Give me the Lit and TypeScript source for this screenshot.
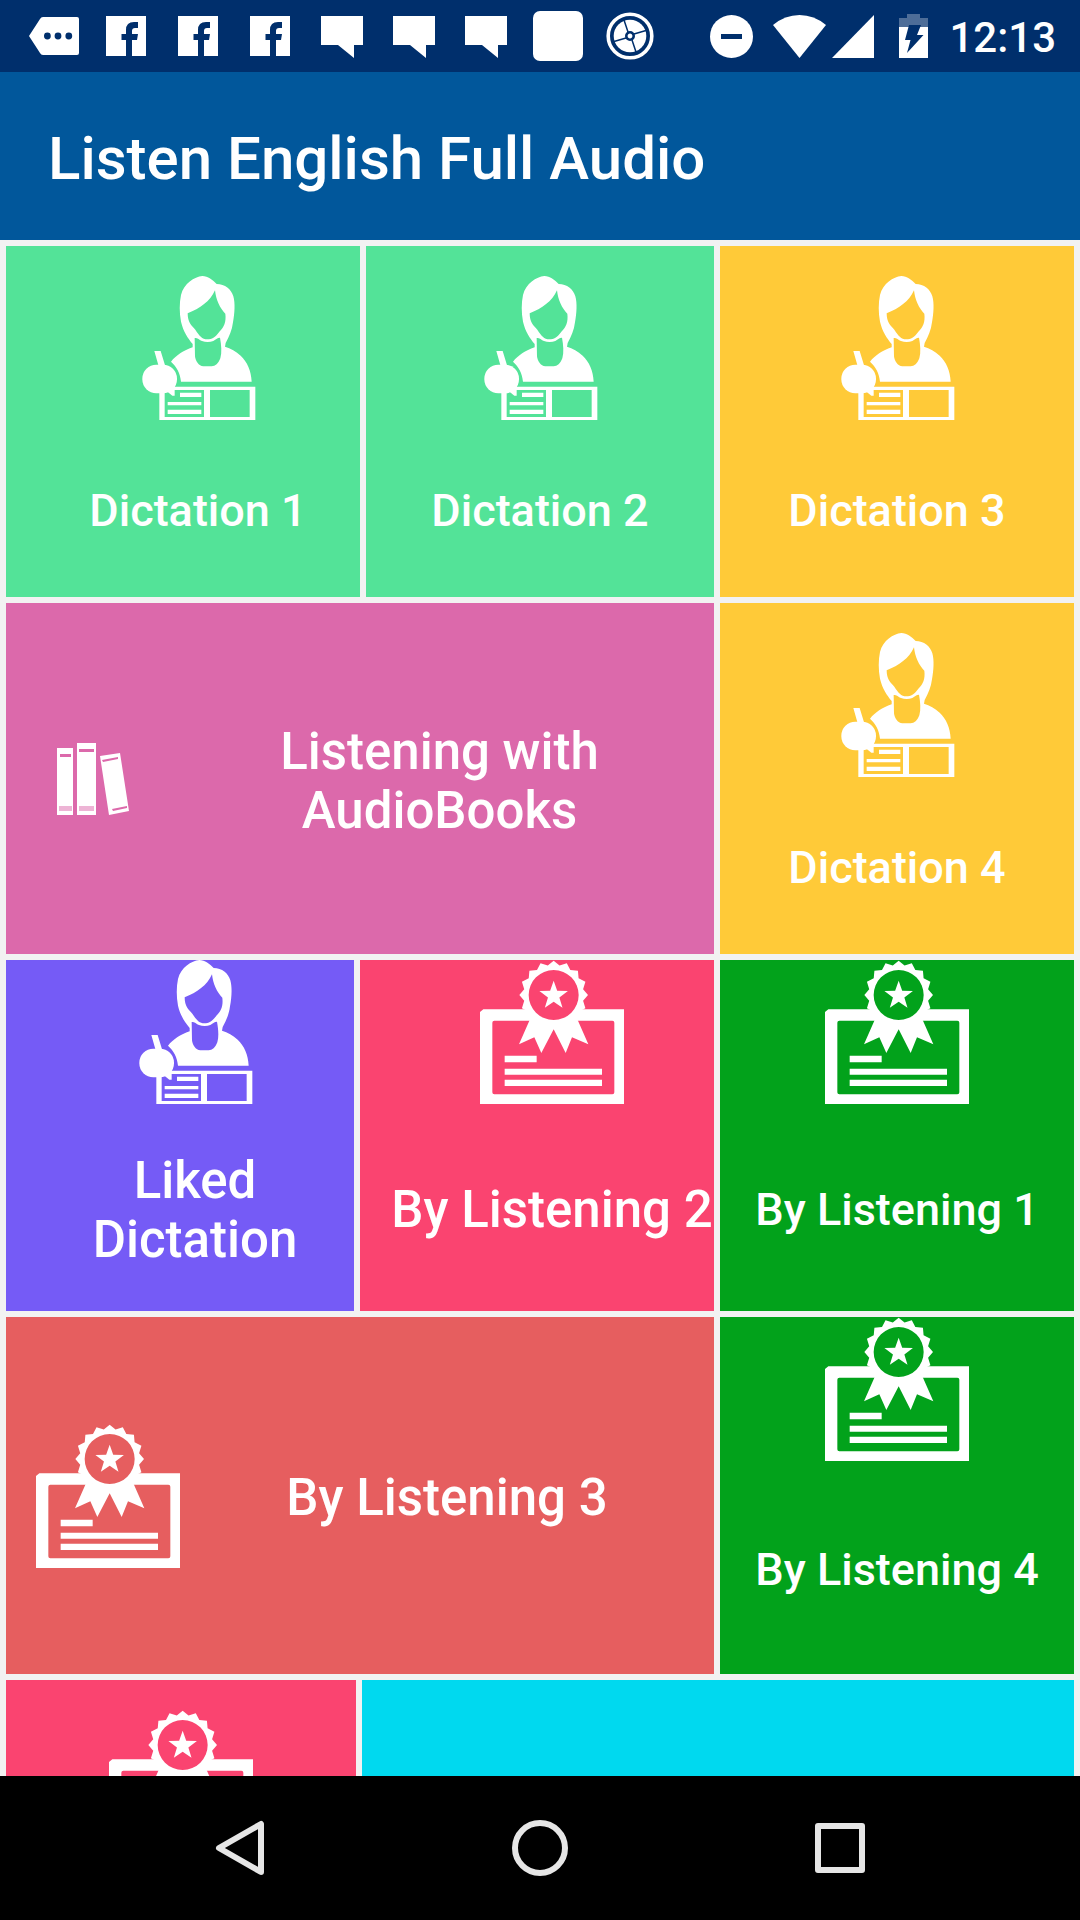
import { LitElement, html, css, svg, nothing } from "lit";
import { customElement, property } from "lit/decorators.js";
import { classMap } from "lit/directives/class-map.js";

type IconName = "teacher" | "certificate" | "books";

/* Alternating outer and inner vertices of a round toothed or starred shape. */
const spikes = (cx: number, cy: number, count: number, outer: number, inner: number): string =>
  Array.from({ length: count * 2 }, (_, i) => {
    const r = i % 2 === 0 ? outer : inner;
    const a = (Math.PI * i) / count - Math.PI / 2;
    return `${(cx + r * Math.cos(a)).toFixed(1)},${(cy + r * Math.sin(a)).toFixed(1)}`;
  }).join(" L");

const medal =
  `M${spikes(221, 105, 16, 103, 90)}Z` +
  "M296 105a75 75 0 1 0-150 0a75 75 0 1 0 150 0Z";

const teacherIcon = svg`
  <svg class="icon" viewBox="378 123 432 432" aria-hidden="true">
    <path fill="currentColor" fill-rule="evenodd" d="M607 123C583 126 552 145 543 180C538 205 538 232 543 260C550 290 564 310 578 327V337C550 346 528 362 513 380C530 396 540 412 543 440H755C753 405 742 382 722 362C708 349 692 340 675 335L677 324C688 304 696 286 699 262C704 236 706 205 700 184C694 163 675 147 650 147C638 134 624 124 607 123Z
      M563 235C600 220 630 200 645 166C648 195 660 220 676 236C679 262 672 276 658 290C645 308 636 313 622 313C606 313 598 302 586 284C574 272 563 262 563 235Z
      M584 309C590 307 598 314 606 318C616 322 630 322 640 318C646 314 652 308 660 308C664 330 666 352 661 370C655 386 646 394 635 394H610C596 394 586 376 585 364Z"/>
    <rect fill="currentColor" x="427" y="389" width="104" height="86" rx="42"/>
    <path fill="currentColor" d="M463 348H482L496 394H476ZM496 455L524 446V482H517L497 466Z"/>
    <path fill="currentColor" fill-rule="evenodd" d="M478 455H766V555H478ZM494 465V546H612V465ZM630 465V546H749V465Z"/>
    <path fill="currentColor" d="M540 473H604V486H540ZM503 501H604V511H503ZM503 524H604V537H503Z"/>
  </svg>`;

const certificateIcon = svg`
  <svg class="icon" viewBox="0 0 432 432" aria-hidden="true">
    <path fill="currentColor" d="M10 148H145L160 170L175 182H43Q37 182 37 188V397Q37 403 43 403H397Q403 403 403 397V188Q403 182 397 182H267L282 170L297 148H432V432H0V156Z"/>
    <path fill="currentColor" fill-rule="evenodd" d=${medal}/>
    <path fill="currentColor" d="M150 178Q221 186 292 178L325 253L276 232L257 279L221 208L184 279L163 232L117 253Z"/>
    <path fill="currentColor" d=${`M${spikes(221, 107, 5, 45, 18)}Z`}/>
    <path fill="currentColor" d="M74 287H170V307H74ZM74 326H366V344H74ZM74 359H366V378H74Z"/>
  </svg>`;

const booksIcon = svg`
  <svg class="icon small" viewBox="0 0 72 72" aria-hidden="true">
    <path fill="currentColor" fill-rule="evenodd" d="M0 5H16V72H0ZM3 11V14H14V11ZM20 0H39V72H20ZM22 6V9H37V6ZM43 13L63 10L72 68L52 72ZM45 17L46 19L61 16V14Z"/>
    <path fill="#dc69ab" fill-opacity=".5" d="M2 63H15V68H2ZM22 63H37V68H22Z"/>
    <path fill="#dc69ab" d="M55 66L70 63V65L56 68Z"/>
  </svg>`;

const icons = { teacher: teacherIcon, certificate: certificateIcon, books: booksIcon };

@customElement("menu-tile")
export class MenuTile extends LitElement {
  @property() icon?: IconName;
  @property() label = "";
  @property() name = "";
  @property() tone = "";
  @property({ type: Boolean }) wide = false;
  @property({ type: Boolean }) large = false;
  @property({ type: Boolean }) inset = false;
  @property({ type: Boolean }) raised = false;

  static styles = css`
    :host {
      display: flex;
      min-width: 0;
    }
    .tile {
      flex: 1;
      min-width: 0;
      display: flex;
      flex-direction: column;
      align-items: center;
      margin: 0;
      padding: 30px 0 0;
      border: 0;
      color: #fff;
      font: 500 45px/53px Roboto, sans-serif;
      text-align: center;
      overflow: hidden;
      cursor: pointer;
    }
    .large { font-size: 51px; line-height: 59px; }
    .raised { padding-top: 0; }
    .inset { padding-left: 30px; }
    .wide { flex-direction: row; padding: 0 0 0 30px; }
    .icon { width: 144px; height: 144px; flex: none; }
    .small { width: 72px; height: 72px; margin: 0 36px 0 21px; }
    .label {
      flex: 1;
      display: flex;
      align-items: center;
      justify-content: center;
      padding-top: 4px;
      white-space: pre-line;
    }
    .mint { background: #53e398; }
    .amber { background: #ffca38; }
    .orchid { background: #dc69ab; }
    .violet { background: #755bf6; }
    .rose { background: #fa4470; }
    .green { background: #02a21b; }
    .coral { background: #e65e5f; }
    .cyan { background: #00d9ef; }
  `;

  render() {
    const classes = {
      tile: true,
      [this.tone]: true,
      wide: this.wide,
      large: this.large,
      inset: this.inset,
      raised: this.raised,
    };
    return html`
      <button class=${classMap(classes)} type="button" aria-label=${this.name || nothing}>
        ${this.icon ? icons[this.icon] : nothing}
        ${this.label ? html`<span class="label">${this.label}</span>` : nothing}
      </button>`;
  }
}

const overflowIcon = svg`
  <svg width="50" height="38" viewBox="0 0 50 38" aria-hidden="true">
    <path fill="#fff" fill-rule="evenodd" d="M14 0H48Q50 0 50 2V36Q50 38 48 38H14Q12 38 11 36L0 19L11 2Q12 0 14 0Z
      M15 19a3.4 3.4 0 1 0 6.8 0a3.4 3.4 0 1 0-6.8 0ZM25.6 19a3.4 3.4 0 1 0 6.8 0a3.4 3.4 0 1 0-6.8 0ZM36.4 19a3.4 3.4 0 1 0 6.8 0a3.4 3.4 0 1 0-6.8 0Z"/>
  </svg>`;

const facebookIcon = svg`
  <svg width="40" height="40" viewBox="0 0 40 40" aria-hidden="true">
    <path fill="#fff" d="M0 0H40V40H26V24H31L32 18H26V15Q26 12 29 12H32V6H28Q20 6 20 14V18H15.500V24H20V40H0Z"/>
  </svg>`;

const bubbleIcon = svg`
  <svg class="bubble" width="42" height="42" viewBox="0 0 42 42" aria-hidden="true">
    <path fill="#fff" d="M0 0H42V29H33V42L17 29H0Z"/>
  </svg>`;

const squareIcon = svg`
  <svg width="50" height="50" viewBox="0 0 50 50" aria-hidden="true">
    <rect fill="#fff" width="50" height="50" rx="7"/>
  </svg>`;

const wheelIcon = svg`
  <svg width="48" height="48" viewBox="-24 -24 48 48" aria-hidden="true">
    <circle r="21.8" fill="none" stroke="#fff" stroke-width="3.600"/>
    <circle r="16.300" fill="#fff"/>
    <path stroke="#002f6c" stroke-width="1.500" d="M-6 -16L-2 -4M16 -5.500L4 -2M6 16L2 4M-16 5.500L-4 2"/>
    <circle r="3.700" fill="#fff" stroke="#002f6c" stroke-width="2.600"/>
  </svg>`;

const notifications = [
  overflowIcon, facebookIcon, facebookIcon, facebookIcon,
  bubbleIcon, bubbleIcon, bubbleIcon, squareIcon, wheelIcon,
];

@customElement("status-bar")
export class StatusBar extends LitElement {
  static styles = css`
    :host {
      display: flex;
      align-items: center;
      justify-content: space-between;
      height: 72px;
      padding: 0 24px 0 18px;
      background: #002f6c;
      color: #fff;
      font: 500 42px/48px Roboto, sans-serif;
    }
    .group { display: flex; align-items: center; }
    .cell { width: 72px; display: flex; justify-content: center; }
    .bubble { margin-top: 2px; }
    .wifi { margin: 0 6px 0 20px; }
    .battery { margin: 0 21px 0 25px; }
    .time { padding-top: 3px; }
  `;

  render() {
    return html`
      <div class="group">
        ${notifications.map((icon) => html`<span class="cell">${icon}</span>`)}
      </div>
      <div class="group">
        <svg width="43" height="43" viewBox="0 0 43 43" aria-hidden="true">
          <circle fill="#fff" cx="21.500" cy="21.500" r="21.500"/>
          <path fill="#002f6c" d="M11 19H32V24H11Z"/>
        </svg>
        <svg class="wifi" width="53" height="43" viewBox="0 0 53 43" aria-hidden="true">
          <path fill="#fff" d="M0 10Q12 0 26.500 0T53 10L26.500 43Z"/>
        </svg>
        <svg width="42" height="43" viewBox="0 0 42 43" aria-hidden="true">
          <path fill="#fff" d="M42 0V43H0Z"/>
        </svg>
        <svg class="battery" width="29" height="44" viewBox="0 0 29 44" aria-hidden="true">
          <path fill="#fff" fill-opacity=".3" d="M8 0H21V4H29V13H0V4H8Z"/>
          <path fill="#fff" d="M0 13H29V44H0Z"/>
          <path fill="#002f6c" d="M10 11H22L18 21H24.500L8 39L11.500 26H6Z"/>
        </svg>
        <time class="time">12:13</time>
      </div>`;
  }
}

@customElement("nav-bar")
export class NavBar extends LitElement {
  static styles = css`
    :host {
      display: flex;
      height: 144px;
      padding: 0 90px;
      background: #000;
    }
    .key {
      flex: 1;
      display: flex;
      align-items: center;
      justify-content: center;
      margin: 0;
      padding: 0;
      border: 0;
      background: none;
      cursor: pointer;
    }
    .glyph {
      width: 56px;
      height: 56px;
      fill: none;
      stroke: #e6e6e6;
      stroke-width: 6;
      stroke-linejoin: round;
    }
  `;

  render() {
    return html`
      <button class="key" type="button" aria-label="Back">
        <svg class="glyph" viewBox="0 0 56 56"><path d="M49 4V52L7 28Z"/></svg>
      </button>
      <button class="key" type="button" aria-label="Home">
        <svg class="glyph" viewBox="0 0 56 56"><circle cx="28" cy="28" r="25"/></svg>
      </button>
      <button class="key" type="button" aria-label="Recent apps">
        <svg class="glyph" viewBox="0 0 56 56"><path d="M6 6H50V50H6Z"/></svg>
      </button>`;
  }
}

@customElement("app-root")
export class AppRoot extends LitElement {
  static styles = css`
    :host {
      display: flex;
      flex-direction: column;
      height: 100vh;
      background: #f2f2f2;
    }
    .bar {
      flex: none;
      display: flex;
      align-items: center;
      box-sizing: border-box;
      height: 168px;
      padding: 5px 48px 0;
      background: #01579b;
    }
    .title {
      margin: 0;
      color: #fff;
      font: 500 60px/70px Roboto, sans-serif;
    }
    .status, .nav { flex: none; box-sizing: border-box; }
    .board {
      flex: 1;
      min-height: 0;
      overflow: hidden;
      padding: 6px;
      display: flex;
      flex-direction: column;
      gap: 6px;
    }
    .row { flex: none; display: grid; gap: 6px; min-height: 351px; }
    .tall { min-height: 357px; }
    .thirds { grid-template-columns: 354fr 348fr 354fr; }
    .thirds-alt { grid-template-columns: 348fr 354fr 354fr; }
    .wide-first { grid-template-columns: 2fr 1fr; }
    .wide-last { grid-template-columns: 350fr 712fr; }
  `;

  render() {
    return html`
      <status-bar class="status"></status-bar>
      <header class="bar"><h1 class="title">Listen English Full Audio</h1></header>
      <main class="board">
        <div class="row thirds">
          <menu-tile tone="mint" icon="teacher" label="Dictation 1" inset></menu-tile>
          <menu-tile tone="mint" icon="teacher" label="Dictation 2"></menu-tile>
          <menu-tile tone="amber" icon="teacher" label="Dictation 3"></menu-tile>
        </div>
        <div class="row wide-first">
          <menu-tile tone="orchid" icon="books" label=${"Listening with\nAudioBooks"} wide large></menu-tile>
          <menu-tile tone="amber" icon="teacher" label="Dictation 4"></menu-tile>
        </div>
        <div class="row thirds-alt">
          <menu-tile tone="violet" icon="teacher" label=${"Liked\nDictation"} inset raised large></menu-tile>
          <menu-tile tone="rose" icon="certificate" label="By Listening 2" inset raised large></menu-tile>
          <menu-tile tone="green" icon="certificate" label="By Listening 1" raised></menu-tile>
        </div>
        <div class="row tall wide-first">
          <menu-tile tone="coral" icon="certificate" label="By Listening 3" wide large></menu-tile>
          <menu-tile tone="green" icon="certificate" label="By Listening 4" raised></menu-tile>
        </div>
        <div class="row wide-last">
          <menu-tile tone="rose" icon="certificate" name="Listening"></menu-tile>
          <menu-tile tone="cyan" name="More"></menu-tile>
        </div>
      </main>
      <nav-bar class="nav"></nav-bar>`;
  }
}
